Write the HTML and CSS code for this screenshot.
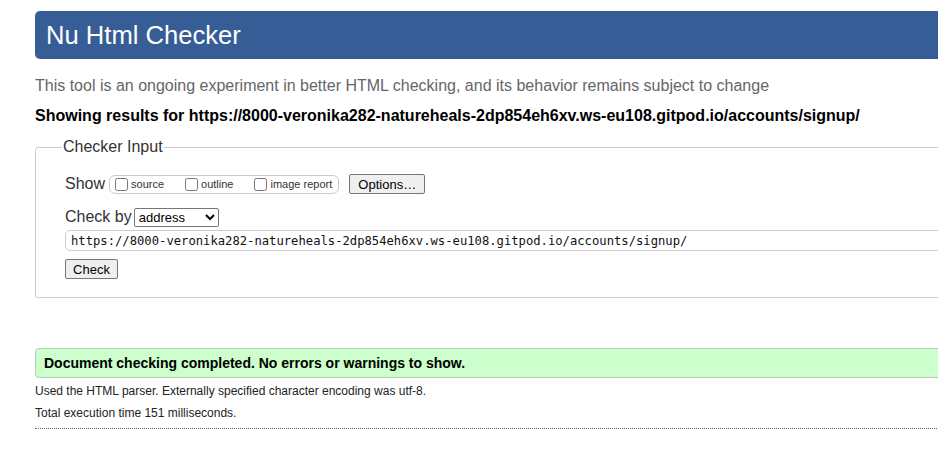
FILE: index.html
```html
<!DOCTYPE html>
<html>
<head>
    <title>Nu Html Checker</title>
    <link rel="stylesheet" href="styles.css">
</head>
<body>
<div class="page">
    <h1 class="banner">Nu Html Checker</h1>
    <p class="intro">This tool is an ongoing experiment in better HTML checking, and its behavior remains subject to change</p>
    <p class="showing">Showing results for https://8000-veronika282-natureheals-2dp854eh6xv.ws-eu108.gitpod.io/accounts/signup/</p>

    <fieldset class="checker">
        <legend>Checker Input</legend>
        <div class="row">
            <span class="label">Show</span>
            <span class="showbox">
                <label><input type="checkbox">source</label>
                <label><input type="checkbox">outline</label>
                <label><input type="checkbox">image report</label>
            </span>
            <button class="btn options">Options…</button>
        </div>
        <div class="row">
            <span class="label">Check by</span>
            <select class="mode">
                <option>address</option>
            </select>
        </div>
        <input type="text" class="url" value="https://8000-veronika282-natureheals-2dp854eh6xv.ws-eu108.gitpod.io/accounts/signup/">
        <button class="btn check">Check</button>
    </fieldset>

    <div class="success">Document checking completed. No errors or warnings to show.</div>
    <p class="details">Used the HTML parser. Externally specified character encoding was utf-8.</p>
    <p class="details">Total execution time 151 milliseconds.</p>
    <hr class="dots">
</div>
</body>
</html>
```

FILE: styles.css
```css
html, body {
    overflow: hidden;
}

body {
    margin: 0;
    background: #fff;
    font-family: "Liberation Sans", Arial, sans-serif;
    color: #000;
}

.page {
    width: 1000px;
    padding: 11px 0 0 35px;
}

.banner {
    margin: 0;
    height: 48px;
    line-height: 48px;
    padding-left: 11px;
    background: #365d95;
    color: #fff;
    font-size: 25.6px;
    font-weight: normal;
    border-radius: 5px;
}

.intro {
    margin: 16px 0 0;
    font-size: 16px;
    line-height: 22px;
    color: #666;
}

.showing {
    margin: 8px 0 0;
    font-size: 16px;
    line-height: 22px;
    font-weight: bold;
}

.checker {
    margin: 11px 0 0;
    padding: 18px 0 18px 29px;
    border: 1px solid #ccc;
    border-radius: 3px;
}

.checker legend {
    margin-left: -3px;
    padding: 0 1px;
    font-size: 16px;
    color: #333;
}

.row {
    display: flex;
    align-items: center;
    height: 20px;
    margin-bottom: 13px;
}

.row .label {
    font-size: 16px;
    color: #333;
    margin-right: 1px;
}

.showbox {
    display: flex;
    align-items: center;
    height: 17px;
    margin-left: 3px;
    padding: 0 6px 0 4px;
    border: 1px solid #ccc;
    border-radius: 6px;
}

.showbox label {
    display: flex;
    align-items: center;
    font-size: 11px;
    color: #333;
    margin-right: 20px;
}

.showbox label:last-child {
    margin-right: 0;
}

.showbox input {
    width: 13px;
    height: 13px;
    margin: 0 3px 0 1px;
}

.btn {
    font-family: "Liberation Sans", Arial, sans-serif;
    font-size: 13px;
    color: #000;
    height: 20px;
    padding: 0 7px;
    background: #efefef;
    border: 1px solid #767676;
    border-radius: 2px;
}

.options {
    margin-left: 10px;
    width: 76px;
}

.mode {
    width: 85px;
    height: 19px;
    margin-left: 1px;
    font-family: "Liberation Sans", Arial, sans-serif;
    font-size: 13px;
    border: 1px solid #767676;
    border-radius: 2px;
    background: #fff;
}

.url {
    display: block;
    box-sizing: border-box;
    width: 100%;
    height: 21px;
    margin: -10px 0 8px;
    padding: 0 5px;
    font-family: "DejaVu Sans Mono", "Liberation Mono", monospace;
    font-size: 12.2px;
    color: #111;
    border: 1px solid #ccc;
    border-radius: 5px;
}

.check {
    display: block;
    width: 53px;
}

.success {
    margin-top: 50px;
    height: 28px;
    line-height: 28px;
    padding-left: 8px;
    background: #ccffcc;
    border: 1px solid #bcccbc;
    border-radius: 4px;
    font-size: 14px;
    font-weight: bold;
}

.details {
    margin: 6px 0 0;
    font-size: 12px;
    line-height: 15px;
    color: #222;
}

.details + .details {
    margin-top: 7px;
}

.dots {
    margin: 7px 0 0;
    border: 0;
    border-top: 1px dotted #666;
}
```
